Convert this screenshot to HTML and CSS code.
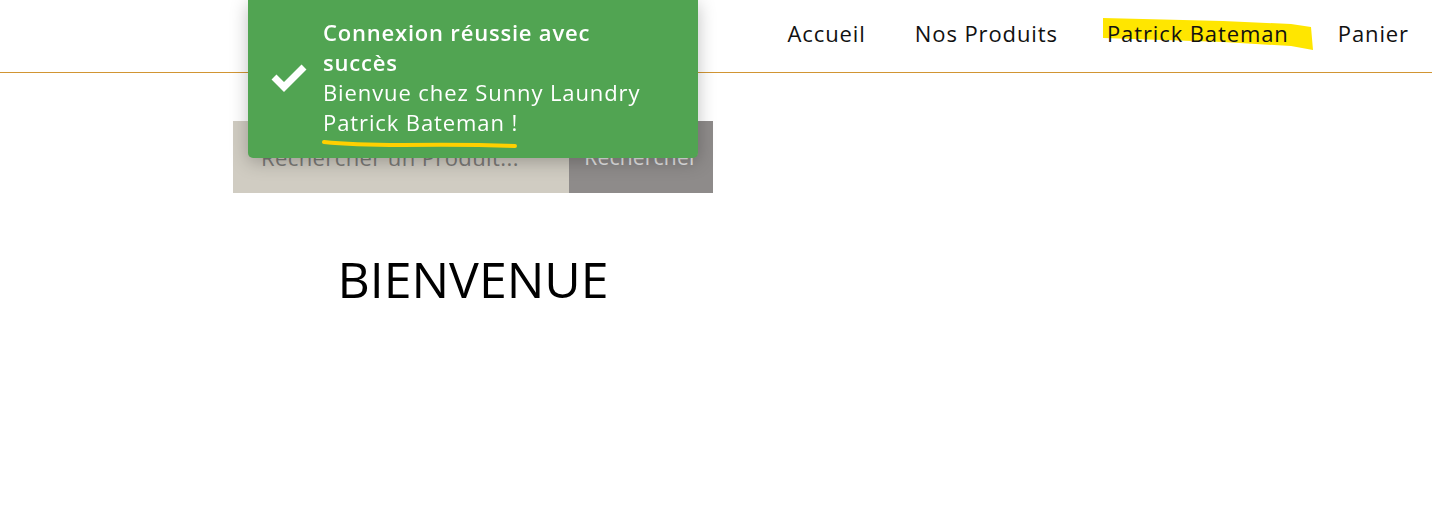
FILE: index.html
```html
<!DOCTYPE html>
<html lang="fr">
<head>
<meta charset="utf-8">
<title>Sunny Laundry</title>
<link rel="stylesheet" href="styles.css">
</head>
<body>
<header class="site-header">
  <nav class="nav">
    <a class="nav-link" href="#">Accueil</a>
    <a class="nav-link" href="#">Nos Produits</a>
    <a class="nav-link" href="#">Patrick Bateman</a>
    <a class="nav-link" href="#">Panier</a>
  </nav>
</header>
<main class="main">
  <form class="search">
    <input class="search-input" type="text" placeholder="Rechercher un Produit...">
    <button class="search-btn" type="button">Rechercher</button>
  </form>
  <h1 class="title">BIENVENUE</h1>
</main>
<div class="toast">
  <svg class="toast-icon" width="38" height="30" viewBox="0 0 38 30"><path d="M4 15 L14 25 L34 5" fill="none" stroke="#fff" stroke-width="7" stroke-linecap="butt" stroke-linejoin="miter"/></svg>
  <div class="toast-body">
    <div class="toast-title">Connexion réussie avec<br>succès</div>
    <div class="toast-text">Bienvue chez Sunny Laundry<br>Patrick Bateman !</div>
  </div>
</div>
<svg class="mark mark-nav" width="216" height="40" viewBox="0 0 216 40"><path d="M0 0 L120 3 L188 6 L208 9 L210 32 L188 28 L120 24 L0 20 Z" fill="#ffe600"/></svg>
<svg class="mark mark-toast" width="200" height="12" viewBox="0 0 200 12"><path d="M2 4 Q30 7 80 7 Q140 6 193 8" fill="none" stroke="#ffd000" stroke-width="4" stroke-linecap="round"/></svg>
</body>
</html>
```
FILE: styles.css
```css
* { box-sizing: border-box; }
html, body { margin: 0; padding: 0; background: #fff; }
body { font-family: "Open Sans", "Lato", sans-serif; color: #111; position: relative; }
.site-header {
  height: 73px;
  border-bottom: 1px solid #d19533;
  display: flex;
  justify-content: flex-end;
  align-items: center;
  padding-right: 23px;
}
.nav { display: flex; gap: 49px; align-items: center; }
.nav-link {
  position: relative;
  z-index: 1;
  color: #111;
  text-decoration: none;
  font-size: 22px;
  letter-spacing: 0.9px;
  line-height: 30px;
  padding-bottom: 6px;
}
.main { padding: 48px 0 0 233px; width: 713px; }
.search { display: flex; height: 72px; margin: 0; }
.search-input {
  width: 336px;
  border: 0;
  background: #d0ccc2;
  font-family: inherit;
  font-size: 22px;
  letter-spacing: 0.4px;
  padding: 0 28px;
  color: #555;
  outline: none;
}
.search-input::placeholder { color: #7c7b78; }
.search-btn {
  width: 144px;
  border: 0;
  background: #8e8b8a;
  color: #e6e6e6;
  font-family: inherit;
  font-size: 21px;
  letter-spacing: 0.2px;
  padding: 0;
}
.title {
  margin: 56px 0 0;
  text-align: center;
  font-family: "Open Sans", sans-serif;
  font-weight: 400;
  font-size: 50px;
  line-height: 60px;
  color: #000;
}
.toast {
  position: fixed;
  left: 248px;
  top: 0;
  width: 450px;
  height: 158px;
  background: #51a452;
  border-radius: 0 0 5px 5px;
  box-shadow: 0 4px 18px rgba(0,0,0,0.25);
  display: flex;
  align-items: center;
  padding: 0 10px 0 22px;
  gap: 15px;
  color: #fff;
  z-index: 2;
}
.toast-icon { flex: none; margin-top: -4px; }
.toast-body { font-size: 22px; letter-spacing: 0.9px; line-height: 30px; margin-top: -4px; white-space: nowrap; }
.toast-title { font-weight: 600; letter-spacing: 0.8px; }
.mark { position: absolute; pointer-events: none; }
.mark-nav { left: 1103px; top: 18px; z-index: 0; }
.mark-toast { left: 322px; top: 138px; z-index: 3; }
```
